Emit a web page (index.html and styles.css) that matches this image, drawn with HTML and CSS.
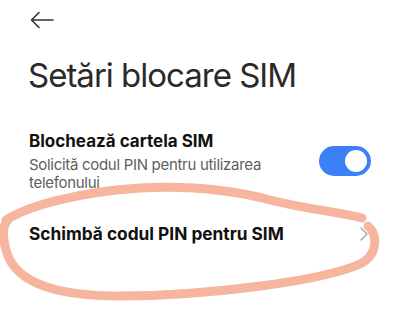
FILE: index.html
```html
<!DOCTYPE html>
<html lang="ro">
<head>
<meta charset="utf-8">
<title>Setări blocare SIM</title>
<link rel="stylesheet" href="styles.css">
</head>
<body>
<div class="page">
  <div class="topbar">
    <svg class="back" width="24" height="18" viewBox="0 0 24 18" aria-hidden="true">
      <path d="M1.5 9 H23 M9 1.5 L1.5 9 L9 16.5" fill="none" stroke="#333" stroke-width="1.6" stroke-linecap="round" stroke-linejoin="round"/>
    </svg>
  </div>
  <h1 class="title">Setări blocare SIM</h1>
  <div class="row row-toggle">
    <div class="row-text">
      <div class="row-title">Blochează cartela SIM</div>
      <div class="row-sub">Solicită codul PIN pentru utilizarea telefonului</div>
    </div>
    <div class="switch"><div class="knob"></div></div>
  </div>
  <div class="row row-link">
    <div class="row-title">Schimbă codul PIN pentru SIM</div>
    <svg class="chev" width="8" height="14" viewBox="0 0 8 14" aria-hidden="true">
      <path d="M1 1 L7 7 L1 13" fill="none" stroke="#a0a0a0" stroke-width="1.3" stroke-linecap="round" stroke-linejoin="round"/>
    </svg>
  </div>
  <svg class="scribble" width="399" height="314" viewBox="0 0 399 314" aria-hidden="true">
    <path d="M6 220 C30 205 80 192 140 188 C200 185 240 192 270 200 C310 210 340 212 362 218" fill="none" stroke="#f6b59e" stroke-width="9" stroke-linecap="round"/>
    <path d="M368 226 C378 235 378 255 360 264 C320 282 200 296 120 296 C60 296 15 285 6 250 C2 235 3 225 8 220" fill="none" stroke="#f6b59e" stroke-width="9" stroke-linecap="round"/>
  </svg>
</div>
</body>
</html>
```
FILE: styles.css
```css
* { box-sizing: border-box; }
html, body { margin: 0; padding: 0; background: #fff; }
body {
  font-family: Inter, "Noto Sans", "Liberation Sans", sans-serif;
  color: #111;
  width: 399px;
  height: 314px;
  overflow: hidden;
}
.page {
  position: relative;
  width: 399px;
  height: 314px;
  padding: 0 28px 0 29px;
}
.topbar {
  height: 44px;
  padding-top: 11px;
  padding-left: 1px;
}
.back { display: block; }
.title {
  margin: 11px 0 0 -1px;
  font-size: 33px;
  line-height: 40px;
  font-weight: 400;
  color: #2a2a2a;
  letter-spacing: -1px;
}
.row {
  display: flex;
  align-items: center;
  justify-content: space-between;
}
.row-toggle {
  margin-top: 35px;
}
.row-text { width: 250px; }
.row-title {
  font-size: 17px;
  line-height: 22px;
  font-weight: 700;
  color: #111;
}
.row-sub {
  font-size: 15px;
  line-height: 18px;
  color: #606060;
  margin-top: 4px;
  letter-spacing: -0.3px;
}
.switch {
  width: 52px;
  height: 30px;
  border-radius: 15px;
  background: #3b81f5;
  display: flex;
  align-items: center;
  justify-content: flex-end;
  padding-right: 4px;
}
.knob {
  width: 22px;
  height: 22px;
  border-radius: 50%;
  background: #fff;
}
.row-link {
  margin-top: 31px;
}
.row-link .row-title { font-size: 17.3px; letter-spacing: 0; }
.chev { display: block; margin-right: 3px; }
.scribble {
  position: absolute;
  left: 0;
  top: 0;
  pointer-events: none;
}
```
